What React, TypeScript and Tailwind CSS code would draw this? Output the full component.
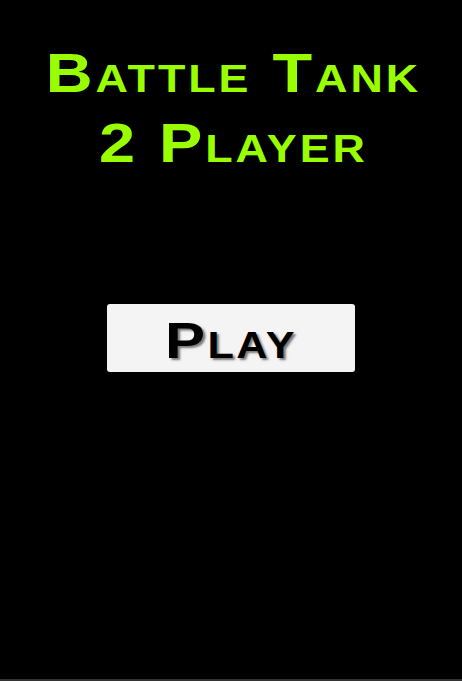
export default function App() {
  return (
    <div
      className="flex h-[681px] w-full flex-col items-center bg-black"
      style={{ fontFamily: '"Liberation Sans", Arial, sans-serif' }}
    >
      <h1 className="mt-[38px] scale-x-[1.18] pl-[4px] text-center text-[55px] leading-[70px] font-bold tracking-[2.5px] text-[#99ff00]">
        B<span className="text-[38px] leading-none uppercase">attle</span> T
        <span className="text-[38px] leading-none uppercase">ank</span>
        <br />2 P<span className="text-[38px] leading-none uppercase">layer</span>
      </h1>
      <button className="mt-[126px] flex h-[68px] w-[248px] items-center justify-center rounded-[3px] bg-[#f4f4f4] pt-[6px]">
        <span className="inline-block scale-x-[1.2] text-[50px] leading-none font-bold tracking-[2px] text-black [text-shadow:2px_2px_2px_#777]">
          P<span className="text-[36px] uppercase">lay</span>
        </span>
      </button>
      <div className="mt-auto h-[2px] w-full bg-[#333]" />
    </div>
  )
}
